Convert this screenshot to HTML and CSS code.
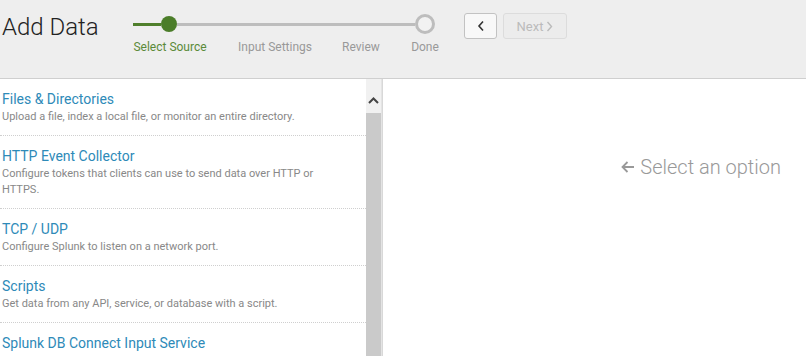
FILE: index.html
```html
<!DOCTYPE html>
<html lang="en">
<head>
  <meta charset="UTF-8" />
  <title>Add Data</title>
  <link rel="stylesheet" href="styles.css">
</head>
<body>

<div id="header">
  <h1 class="page-title">Add Data</h1>

  <div class="steps">
    <div class="track">
      <span class="seg seg-done"></span>
      <span class="dot dot-active"></span>
      <span class="seg seg-todo"></span>
      <span class="dot dot-end"></span>
    </div>
    <div class="labels">
      <span class="label active" style="width:100px">Select Source</span>
      <span class="label" style="width:100px;margin-left:5px">Input Settings</span>
      <span class="label" style="width:60px;margin-left:6px">Review</span>
      <span class="label" style="width:50px;margin-left:9px">Done</span>
    </div>
  </div>

  <div class="nav-buttons">
    <button class="btn btn-back">
      <svg width="8" height="12" viewBox="0 0 8 12"><path d="M6 1.5 L2 6 L6 10.5" fill="none" stroke="#333" stroke-width="1.6"/></svg>
    </button>
    <button class="btn btn-next" disabled>Next
      <svg width="7" height="11" viewBox="0 0 7 11"><path d="M1.5 1 L5.5 5.5 L1.5 10" fill="none" stroke="#bbb" stroke-width="1.4"/></svg>
    </button>
  </div>
</div>

<div id="main">
  <div class="source-list">
    <div class="source">
      <div class="source-title">Files &amp; Directories</div>
      <div class="source-desc">Upload a file, index a local file, or monitor an entire directory.</div>
    </div>
    <div class="source">
      <div class="source-title">HTTP Event Collector</div>
      <div class="source-desc">Configure tokens that clients can use to send data over HTTP or HTTPS.</div>
    </div>
    <div class="source">
      <div class="source-title">TCP / UDP</div>
      <div class="source-desc">Configure Splunk to listen on a network port.</div>
    </div>
    <div class="source">
      <div class="source-title">Scripts</div>
      <div class="source-desc">Get data from any API, service, or database with a script.</div>
    </div>
    <div class="source">
      <div class="source-title">Splunk DB Connect Input Service</div>
    </div>
  </div>

  <div class="scrollbar">
    <div class="scroll-up">
      <svg width="11" height="7" viewBox="0 0 11 7"><path d="M1 6 L5.5 1.5 L10 6" fill="none" stroke="#444" stroke-width="2"/></svg>
    </div>
    <div class="scroll-thumb"></div>
  </div>

  <div class="detail">
    <div class="hint">
      <svg width="15" height="14" viewBox="0 0 15 14"><path d="M14 7 H2.5 M7.5 2 L2.5 7 L7.5 12" fill="none" stroke="#999" stroke-width="1.8"/></svg>
      Select an option
    </div>
  </div>
</div>

</body>
</html>
```

FILE: styles.css
```css
html, body {
  margin: 0;
  height: 100%;
  font-family: Roboto, "Liberation Sans", sans-serif;
  background: #fff;
  overflow: hidden;
}

#header {
  height: 78px;
  background: #eeeeee;
  border-bottom: 1px solid #cfcfcf;
  display: flex;
  align-items: flex-start;
}

.page-title {
  margin: 13px 0 0 2px;
  font-size: 24px;
  font-weight: 300;
  color: #222;
  line-height: 28px;
  width: 118px;
}

.steps {
  margin-top: 14px;
  width: 330px;
}

.track {
  display: flex;
  align-items: center;
  height: 20px;
  padding-left: 13px;
}

.seg {
  height: 3px;
}

.seg-done {
  width: 28px;
  background: #4f7f2c;
}

.seg-todo {
  width: 238px;
  background: #bdbdbd;
}

.dot {
  border-radius: 50%;
  box-sizing: border-box;
}

.dot-active {
  width: 16px;
  height: 16px;
  background: #4b7d29;
}

.dot-end {
  width: 20px;
  height: 20px;
  border: 3px solid #bdbdbd;
  background: #f2f2f2;
}

.labels {
  display: flex;
  margin-top: 5px;
}

.label {
  text-align: center;
  font-size: 12px;
  line-height: 16px;
  color: #999;
  white-space: nowrap;
}

.label.active {
  color: #5a8a38;
}

.nav-buttons {
  display: flex;
  gap: 6px;
  margin-top: 13px;
  margin-left: 14px;
}

.btn {
  height: 26px;
  box-sizing: border-box;
  border-radius: 3px;
  font-family: Roboto, "Liberation Sans", sans-serif;
  font-size: 13px;
  display: flex;
  align-items: center;
  justify-content: center;
  padding: 0;
}

.btn-back {
  width: 33px;
  border: 1px solid #c2c2c2;
  background: #f8f8f8;
}

.btn-next {
  width: 64px;
  gap: 3px;
  border: 1px solid #dcdcdc;
  background: #ececec;
  color: #bbb;
}

#main {
  display: flex;
  height: 277px;
}

.source-list {
  width: 366px;
  overflow: hidden;
}

.source {
  padding: 10px 0 10px 2px;
  border-bottom: 1px dotted #cfcfcf;
}

.source-title {
  font-size: 14px;
  line-height: 20px;
  color: #2e8ab8;
}

.source-desc {
  font-size: 11px;
  line-height: 16px;
  color: #888;
  padding-right: 40px;
}

.scrollbar {
  width: 15px;
  display: flex;
  flex-direction: column;
  background: #f1f1f1;
  border-right: 1px solid #e4e4e4;
}

.scroll-up {
  height: 34px;
  display: flex;
  justify-content: center;
  align-items: center;
  padding-top: 8px;
  box-sizing: border-box;
}

.scroll-thumb {
  flex: 1;
  background: #cacaca;
}

.detail {
  flex: 1;
  border-left: 1px solid #d8d8d8;
  display: flex;
  justify-content: flex-end;
  padding: 76px 25px 0 0;
}

.hint {
  font-size: 20px;
  font-weight: 300;
  color: #999;
  line-height: 24px;
  height: 24px;
  display: flex;
  align-items: center;
  gap: 5px;
}
```
